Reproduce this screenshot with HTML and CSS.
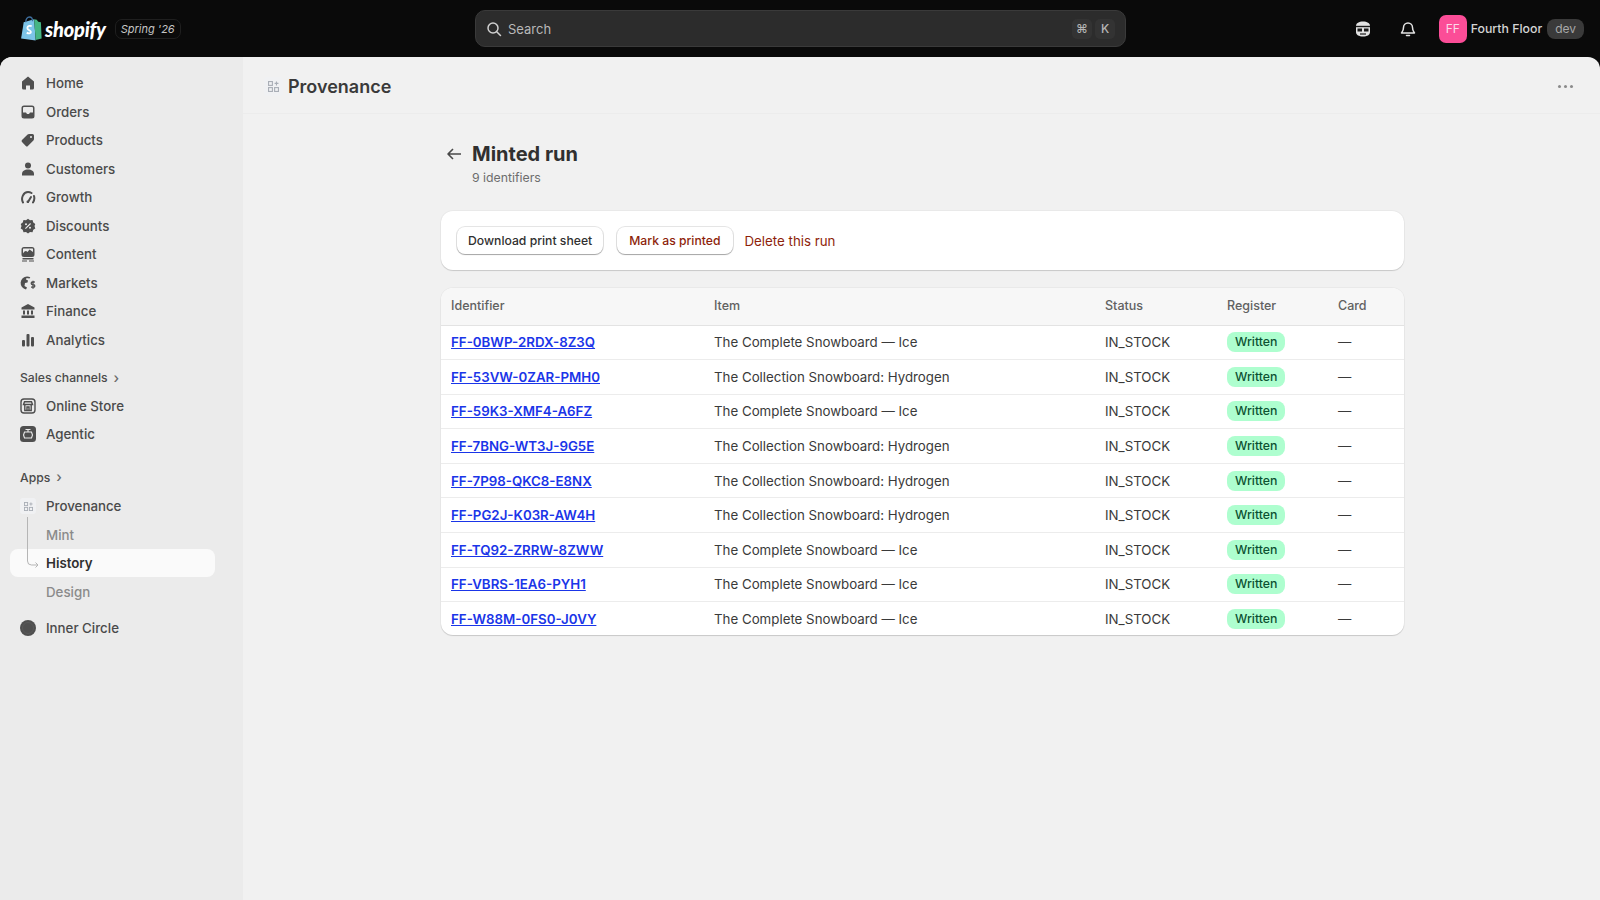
FILE: index.html
```html
<!DOCTYPE html>
<html lang="en">

<head>
    <meta charset="UTF-8">
    <meta name="viewport" content="width=device-width, initial-scale=1.0">
    <title>Provenance - Minted run</title>
    <link rel="stylesheet" href="styles.css">
</head>

<body>
    <header class="topbar">
        <div class="brand">
            <svg class="brand-bag" width="22" height="25" viewBox="0 0 21 24">
                <path d="M1 21.500 3.500 6 13.500 3 15 23.500z" fill="#7cc4e8" />
                <path d="M13.500 3l2.500.5 1.500 2 2.500.5 0 0 .7 15.500-5.700 1.500z" fill="#45b583" />
                <path d="M5.500 6c0-3 1.500-5 3.500-5s3 1.500 3 4" fill="none" stroke="#3f6f9e" stroke-width="1.300" />
                <path d="M11.200 9.800c-1-.6-4.200-.6-4.200 1.700 0 2.300 3.400 2 3.400 3.900 0 1.600-2.400 1.600-4 .6" fill="none" stroke="#fff" stroke-width="1.800" />
            </svg>
            <span class="brand-name">shopify</span>
            <span class="brand-tag">Spring '26</span>
        </div>
        <div class="search">
            <svg width="16" height="16" viewBox="0 0 16 16" fill="none" stroke="#d0d0d0" stroke-width="1.500">
                <circle cx="7" cy="7" r="5" />
                <path d="M11 11l3.500 3.500" stroke-linecap="round" />
            </svg>
            <span class="search-text">Search</span>
            <span class="key">⌘</span>
            <span class="key">K</span>
        </div>
        <div class="top-actions">
            <svg class="top-icon" width="18" height="18" viewBox="0 0 18 18">
                <path d="M2 6c0-3 3-4.500 7-4.500S16 3 16 6v6c0 3-3 4.500-7 4.500S2 15 2 12z" fill="#e3e3e3" />
                <path d="M2 5.800h14v1.400H2z" fill="#1a1a1a" />
                <path d="M3.500 8.500h4.500v3H3.500zM10 8.500h4.500v3H10z" fill="#1a1a1a" />
                <path d="M6 14h6" stroke="#1a1a1a" stroke-width="1.200" />
            </svg>
            <svg class="top-icon bell" width="18" height="18" viewBox="0 0 18 18" fill="none" stroke="#e3e3e3" stroke-width="1.500">
                <path d="M4.500 7.500a4.500 4.500 0 0 1 9 0c0 3 1 4 2 5.500h-13c1-1.500 2-2.500 2-5.500z" stroke-linejoin="round" />
                <path d="M7.500 15.500h3" stroke-linecap="round" />
            </svg>
            <span class="avatar">FF</span>
            <span class="shop-name">Fourth Floor</span>
            <span class="dev-tag">dev</span>
        </div>
    </header>

    <div class="frame">
        <nav class="sidebar">
            <ul class="nav-list">
                <li class="nav-item">
                    <svg class="nav-icon" viewBox="0 0 16 16"><path d="M8 1.500 14 6.500V13a1.500 1.500 0 0 1-1.500 1.500H10V10.500H6v4H3.500A1.500 1.500 0 0 1 2 13V6.500z" /></svg>
                    Home
                </li>
                <li class="nav-item">
                    <svg class="nav-icon" viewBox="0 0 16 16"><path fill-rule="evenodd" d="M4 1.500h8A2.500 2.500 0 0 1 14.500 4v8a2.500 2.500 0 0 1-2.500 2.500H4A2.500 2.500 0 0 1 1.500 12V4A2.500 2.500 0 0 1 4 1.500zM4 3a1 1 0 0 0-1 1v4.500h3l1 1.500h2l1-1.500h3V4a1 1 0 0 0-1-1z" /></svg>
                    Orders
                </li>
                <li class="nav-item">
                    <svg class="nav-icon" viewBox="0 0 16 16"><path fill-rule="evenodd" d="M9 2h3.500A1.500 1.500 0 0 1 14 3.500V7a2 2 0 0 1-.6 1.400l-5.500 5.500a1.500 1.500 0 0 1-2.100 0L2 10.100a1.500 1.500 0 0 1 0-2.100l5.600-5.400A2 2 0 0 1 9 2zm2 2a1 1 0 1 0 0 2 1 1 0 0 0 0-2z" /></svg>
                    Products
                </li>
                <li class="nav-item">
                    <svg class="nav-icon" viewBox="0 0 16 16"><circle cx="8" cy="4.500" r="3" /><path d="M2 13c0-3 2.500-4.500 6-4.500s6 1.500 6 4.500v1.500H2z" /></svg>
                    Customers
                </li>
                <li class="nav-item">
                    <svg class="nav-icon line" viewBox="0 0 16 16"><path d="M3 13.500C.5 9 3.500 3 8 3c1.500 0 2.500.4 3.500 1M14 7c.7 2.300.3 4.600-1 6.500" /><path d="M8 13l3-5" /><circle class="dot" cx="7.800" cy="12.800" r="1.300" /></svg>
                    Growth
                </li>
                <li class="nav-item">
                    <svg class="nav-icon" viewBox="0 0 16 16"><path fill-rule="evenodd" d="M8 .800l2 1.500 2.500-.2.800 2.400 2 1.500-.8 2 .8 2.400-2 1.400-.8 2.400-2.500-.1-2 1.500-2-1.500-2.500.1-.8-2.400-2-1.400.8-2.400-.8-2 2-1.500.8-2.400L6 2.300zM6 5.200a1 1 0 1 0 0 2 1 1 0 0 0 0-2zm4 3.600a1 1 0 1 0 0 2 1 1 0 0 0 0-2zm.2-3.700L5 10.200l.8.800 5.200-5.100z" /></svg>
                    Discounts
                </li>
                <li class="nav-item">
                    <svg class="nav-icon" viewBox="0 0 16 16"><path fill-rule="evenodd" d="M4 1h8A2.500 2.500 0 0 1 14.500 3.500v5A2.500 2.500 0 0 1 12 11H4A2.500 2.500 0 0 1 1.500 8.500v-5A2.500 2.500 0 0 1 4 1zM3 7.500c2-3 3-3 4.500-1.500l2-2.500L13 6V3a.5.500 0 0 0-.5-.5h-9A.5.500 0 0 0 3 3z" /><path d="M2.500 12h11v1.500h-11zM2 14.500h5V15.500H2zM9 14.500h5V15.500H9z" /></svg>
                    Content
                </li>
                <li class="nav-item">
                    <svg class="nav-icon" viewBox="0 0 16 16"><path d="M7 1.500a6.500 6.500 0 0 0-1 12.900l1-1.900-2.500-1.500.5-3 2.500-.5L8 5.500 6 4.500 6.500 3l3 .5.800-1.200A6.500 6.500 0 0 0 7 1.500z" /><path d="M14.800 7h-2.300a1.200 1.200 0 0 0 0 2.600h1a1.200 1.200 0 0 1 0 2.600h-2.500M13 5.800v7.900" fill="none" stroke="#4f4f4f" stroke-width="1.300" /></svg>
                    Markets
                </li>
                <li class="nav-item">
                    <svg class="nav-icon" viewBox="0 0 16 16"><path d="M8 1l6.500 3.500V6.500h-13V4.500zM3 7.500h2v4H3zM7 7.500h2v4H7zM11 7.500h2v4h-2zM1.500 12.500h13V15h-13z" /></svg>
                    Finance
                </li>
                <li class="nav-item">
                    <svg class="nav-icon" viewBox="0 0 16 16"><rect x="2" y="8" width="3" height="6.500" rx="1" /><rect x="6.500" y="2" width="3" height="12.500" rx="1" /><rect x="11" y="5" width="3" height="9.500" rx="1" /></svg>
                    Analytics
                </li>
            </ul>

            <div class="nav-heading sales">Sales channels <span class="chev">›</span></div>
            <ul class="nav-list">
                <li class="nav-item">
                    <svg class="nav-icon line thin" viewBox="0 0 16 16"><rect x="1" y="1" width="14" height="14" rx="3" /><path d="M3.500 6.500 4.500 3.700h7l1 2.800zM4.800 6.500v6h6.400v-6M7 12.500V9h2v3.500" /></svg>
                    Online Store
                </li>
                <li class="nav-item">
                    <svg class="nav-icon" viewBox="0 0 16 16"><rect width="16" height="16" rx="3.500" /><path d="M5.500 3.500h5M4.500 6h7l1 3-1 3h-7l-1-3zM8 3.500V6" fill="none" stroke="#ebebeb" stroke-width="1.100" /></svg>
                    Agentic
                </li>
            </ul>

            <div class="nav-heading apps">Apps <span class="chev">›</span></div>
            <ul class="nav-list">
                <li class="nav-item">
                    <span class="app-icon">
                        <svg width="9" height="9" viewBox="0 0 10 10" fill="none" stroke="#a9aeb6" stroke-width="1"><rect x=".5" y=".5" width="3.500" height="3.500" /><rect x=".5" y="6" width="3.500" height="3.500" /><rect x="6" y="6" width="3.500" height="3.500" /><path d="M7.700 .5v3.500M6 2.200h3.500" /></svg>
                    </span>
                    Provenance
                </li>
                <li class="nav-item sub">Mint</li>
                <li class="nav-item sub current">
                    <svg class="tree" width="12" height="52" viewBox="0 0 12 52" fill="none" stroke="#b5b5b5" stroke-width="1"><path d="M.5 0v44a4 4 0 0 0 4 4H11M8.500 45.500 11 48l-2.500 2.500" /></svg>
                    History
                </li>
                <li class="nav-item sub">Design</li>
            </ul>

            <ul class="nav-list inner">
                <li class="nav-item">
                    <svg class="nav-icon" viewBox="0 0 16 16"><circle cx="8" cy="8" r="8" /><circle cx="8" cy="8" r="5.500" fill="none" stroke="#5d5d5d" stroke-width=".7" /></svg>
                    Inner Circle
                </li>
            </ul>
        </nav>

        <div class="content">
            <div class="app-bar">
                <div class="app-title">
                    <span class="app-icon">
                        <svg width="11" height="11" viewBox="0 0 10 10" fill="none" stroke="#a9aeb6" stroke-width="1"><rect x=".5" y=".5" width="3.500" height="3.500" /><rect x=".5" y="6" width="3.500" height="3.500" /><rect x="6" y="6" width="3.500" height="3.500" /><path d="M7.700 .5v3.500M6 2.200h3.500" /></svg>
                    </span>
                    Provenance
                </div>
                <span class="more"><i></i><i></i><i></i></span>
            </div>

            <main class="page">
                <div class="page-head">
                    <svg class="back" width="16" height="14" viewBox="0 0 16 14" fill="none" stroke="#4a4a4a" stroke-width="1.600">
                        <path d="M15 7H2M7 2 2 7l5 5" stroke-linejoin="round" />
                    </svg>
                    <div>
                        <h1>Minted run</h1>
                        <p>9 identifiers</p>
                    </div>
                </div>

                <section class="card actions">
                    <button class="btn">Download print sheet</button>
                    <button class="btn danger">Mark as printed</button>
                    <a class="delete-link">Delete this run</a>
                </section>

                <section class="card table-card">
                    <table>
                        <thead>
                            <tr>
                                <th class="col-id">Identifier</th>
                                <th class="col-item">Item</th>
                                <th class="col-status">Status</th>
                                <th class="col-reg">Register</th>
                                <th>Card</th>
                            </tr>
                        </thead>
                        <tbody>
                            <tr><td><a>FF-0BWP-2RDX-8Z3Q</a></td><td>The Complete Snowboard — Ice</td><td>IN_STOCK</td><td><span class="badge">Written</span></td><td>—</td></tr>
                            <tr><td><a>FF-53VW-0ZAR-PMH0</a></td><td>The Collection Snowboard: Hydrogen</td><td>IN_STOCK</td><td><span class="badge">Written</span></td><td>—</td></tr>
                            <tr><td><a>FF-59K3-XMF4-A6FZ</a></td><td>The Complete Snowboard — Ice</td><td>IN_STOCK</td><td><span class="badge">Written</span></td><td>—</td></tr>
                            <tr><td><a>FF-7BNG-WT3J-9G5E</a></td><td>The Collection Snowboard: Hydrogen</td><td>IN_STOCK</td><td><span class="badge">Written</span></td><td>—</td></tr>
                            <tr><td><a>FF-7P98-QKC8-E8NX</a></td><td>The Collection Snowboard: Hydrogen</td><td>IN_STOCK</td><td><span class="badge">Written</span></td><td>—</td></tr>
                            <tr><td><a>FF-PG2J-K03R-AW4H</a></td><td>The Collection Snowboard: Hydrogen</td><td>IN_STOCK</td><td><span class="badge">Written</span></td><td>—</td></tr>
                            <tr><td><a>FF-TQ92-ZRRW-8ZWW</a></td><td>The Complete Snowboard — Ice</td><td>IN_STOCK</td><td><span class="badge">Written</span></td><td>—</td></tr>
                            <tr><td><a>FF-VBRS-1EA6-PYH1</a></td><td>The Complete Snowboard — Ice</td><td>IN_STOCK</td><td><span class="badge">Written</span></td><td>—</td></tr>
                            <tr><td><a>FF-W88M-0FS0-J0VY</a></td><td>The Complete Snowboard — Ice</td><td>IN_STOCK</td><td><span class="badge">Written</span></td><td>—</td></tr>
                        </tbody>
                    </table>
                </section>
            </main>
        </div>
    </div>
</body>

</html>
```

FILE: styles.css
```css
* {
    box-sizing: border-box;
}

html,
body {
    height: 100%;
}

body {
    margin: 0;
    overflow: hidden;
    font-family: Inter, "Liberation Sans", sans-serif;
    font-size: 13.3px;
    color: #303030;
    background: #0a0a0a;
    display: flex;
    flex-direction: column;
}

ul {
    list-style: none;
    margin: 0;
    padding: 0;
}

/* top bar */
.topbar {
    height: 57px;
    flex-shrink: 0;
    display: flex;
    align-items: center;
    position: relative;
    padding: 0 16px 0 20px;
}

.brand {
    display: flex;
    align-items: center;
    width: 455px;
}

.brand-bag {
    margin-right: 3px;
}

.brand-name {
    font-family: Lato, sans-serif;
    font-weight: 900;
    font-style: italic;
    font-size: 20px;
    letter-spacing: -0.2px;
    color: #fff;
}

.brand-tag {
    margin-left: 9px;
    height: 20px;
    padding: 0 5px;
    border: 1px solid #1f1f1f;
    border-radius: 7px;
    font-size: 11px;
    font-style: italic;
    line-height: 18px;
    color: #c4c4c4;
}

.search {
    width: 651px;
    height: 37px;
    display: flex;
    align-items: center;
    padding: 0 10px 0 10px;
    background: #2c2c2c;
    border: 1px solid #3a3a3a;
    border-radius: 10px;
}

.search-text {
    flex: 1;
    margin-left: 6px;
    font-size: 13px;
    color: #b8b8b8;
}

.key {
    width: 20px;
    height: 20px;
    margin-left: 3px;
    border-radius: 5px;
    background: #333;
    font-size: 12px;
    font-weight: 500;
    line-height: 20px;
    text-align: center;
    color: #b5b5b5;
}

.top-actions {
    margin-left: auto;
    display: flex;
    align-items: center;
}

.bell {
    margin-left: 27px;
}

.avatar {
    width: 28px;
    height: 28px;
    margin-left: 22px;
    border-radius: 7px;
    background: #fb4d97;
    font-size: 12px;
    line-height: 28px;
    text-align: center;
    color: #fbd9e8;
}

.shop-name {
    margin-left: 4px;
    font-size: 12.3px;
    font-weight: 500;
    color: #d4d4d4;
}

.dev-tag {
    margin-left: 5px;
    height: 20px;
    padding: 0 8px;
    border-radius: 8px;
    background: #3a3a3a;
    font-size: 12px;
    line-height: 20px;
    color: #a8a8a8;
}

/* frame under the top bar */
.frame {
    flex: 1;
    display: flex;
    min-height: 0;
    border-radius: 12px 12px 0 0;
    overflow: hidden;
    background: #f1f1f1;
}

.sidebar {
    width: 243px;
    flex-shrink: 0;
    padding: 12px 28px 0 10px;
    background: #ebebeb;
}

.nav-list {
    display: flex;
    flex-direction: column;
    gap: 0.5px;
}

.nav-item {
    height: 28px;
    display: flex;
    align-items: center;
    position: relative;
    padding-left: 36px;
    border-radius: 8px;
    font-weight: 500;
    color: #4a4a4a;
}

.nav-icon {
    position: absolute;
    left: 10px;
    top: 6px;
    width: 16px;
    height: 16px;
    fill: #4f4f4f;
}

.nav-icon.line {
    fill: none;
    stroke: #4f4f4f;
    stroke-width: 2;
    stroke-linecap: round;
}

.nav-icon.thin {
    stroke-width: 1.400;
}

.nav-icon .dot {
    fill: #4f4f4f;
    stroke: none;
}

.nav-heading {
    height: 28px;
    display: flex;
    align-items: center;
    gap: 6px;
    padding-left: 10px;
    font-size: 12.2px;
    font-weight: 500;
    color: #4a4a4a;
}

.sales {
    margin-top: 10px;
}

.apps {
    margin-top: 15px;
}

.apps + .nav-list {
    margin-top: 1px;
}

.chev {
    font-size: 14px;
    line-height: 14px;
    color: #6a6a6a;
}

.app-icon {
    width: 16px;
    height: 16px;
    display: inline-flex;
    align-items: center;
    justify-content: center;
    border-radius: 3px;
    background: #f0f1f3;
}

.nav-item .app-icon {
    position: absolute;
    left: 10px;
    top: 6px;
}

.sub {
    color: #8a8a8a;
}

.sub.current {
    background: #fafafa;
    font-weight: 600;
    color: #303030;
}

.tree {
    position: absolute;
    left: 17px;
    top: -32px;
}

.inner {
    margin-top: 8px;
}

/* main area */
.content {
    flex: 1;
    min-width: 0;
}

.app-bar {
    height: 57px;
    display: flex;
    align-items: center;
    justify-content: space-between;
    padding: 2px 27px 0 21px;
    border-bottom: 1px solid #ececec;
}

.app-title {
    display: flex;
    align-items: center;
    gap: 5px;
    font-size: 18px;
    font-weight: 600;
    color: #3a3a3a;
}

.app-title .app-icon {
    width: 19px;
    height: 19px;
}

.more {
    display: flex;
    gap: 3px;
}

.more i {
    width: 3px;
    height: 3px;
    border-radius: 50%;
    background: #8a8a8a;
}

.page {
    width: 963px;
    margin-left: 198px;
    padding-top: 26px;
}

.page-head {
    display: flex;
    align-items: flex-start;
    gap: 10px;
    padding-left: 5px;
    height: 71px;
}

.back {
    margin-top: 7px;
}

h1 {
    margin: 0;
    font-size: 20px;
    font-weight: 700;
    line-height: 28px;
    color: #303030;
}

.page-head p {
    margin: 1px 0 0;
    font-size: 12.3px;
    line-height: 18px;
    color: #6d6d6d;
}

.card {
    background: #fff;
    border-radius: 12px;
    box-shadow: 0 1px 1px rgba(0, 0, 0, 0.14), 0 0 0 1px rgba(0, 0, 0, 0.03);
}

.actions {
    height: 59px;
    display: flex;
    align-items: center;
    padding: 0 16px 0 16px;
}

.btn {
    height: 27px;
    padding: 0 11px;
    margin-right: 14px;
    border: 0;
    border-radius: 8px;
    background: #fff;
    box-shadow: 0 1px 1px rgba(0, 0, 0, 0.28), 0 0 0 1px rgba(0, 0, 0, 0.1);
    font-family: inherit;
    font-size: 12.2px;
    font-weight: 500;
    color: #303030;
}

.btn.danger {
    padding: 0 12px;
    margin-right: 12px;
    color: #8e1f0b;
}

.delete-link {
    color: #8e1f0b;
}

.table-card {
    margin-top: 18px;
    overflow: hidden;
}

table {
    width: 100%;
    border-collapse: collapse;
    table-layout: fixed;
}

th {
    height: 37px;
    padding: 0 0 1px 10px;
    background: #f7f7f7;
    border-bottom: 1px solid #e3e3e3;
    text-align: left;
    font-size: 12.5px;
    font-weight: 500;
    color: #616161;
}

td {
    height: 34.600px;
    padding: 0 0 0 10px;
    border-bottom: 1px solid #ececec;
    color: #3a3a3a;
}

tr:last-child td {
    height: 33px;
    border-bottom: 0;
}

.col-id {
    width: 263px;
}

.col-item {
    width: 391px;
}

.col-status {
    width: 122px;
}

.col-reg {
    width: 111px;
}

td a {
    font-weight: 600;
    color: #1a35e8;
    text-decoration: underline;
}

.badge {
    display: inline-block;
    height: 20px;
    padding: 0 8px;
    border-radius: 8px;
    background: #aefecf;
    font-size: 12.3px;
    font-weight: 500;
    line-height: 20px;
    color: #0c5132;
}
```
